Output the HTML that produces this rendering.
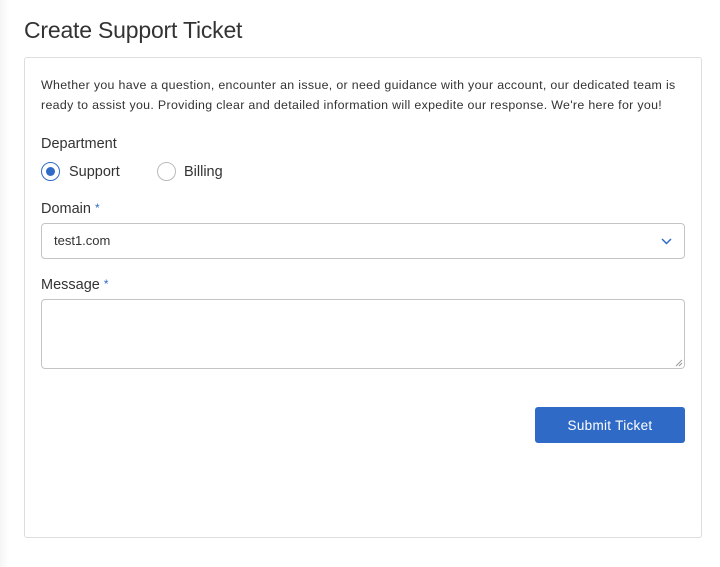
<!DOCTYPE html>
<html><head><style>
body{margin:0;width:720px;height:567px;background:#fff;font-family:"Liberation Sans",sans-serif;color:#333;position:relative;overflow:hidden}
.edge{position:absolute;left:0;top:0;width:9px;height:567px;background:linear-gradient(90deg,#f5f5f5,#fff)}
h1{position:absolute;left:24px;top:17px;margin:0;font-weight:400;font-size:23px;color:#333;letter-spacing:-0.2px}
.card{position:absolute;left:24px;top:57px;width:678px;height:481px;border:1px solid #ddd;border-radius:3px;box-sizing:border-box}
.p{position:absolute;left:41px;top:76px;width:645px;font-size:12.4px;line-height:19.5px;color:#333;letter-spacing:0.32px}
.lbl{position:absolute;left:41px;font-size:14.5px;color:#333}
.lbl b{color:#2f6bc6;font-weight:400;font-size:12px;vertical-align:top}
.radio{position:absolute;top:162px;width:19px;height:19px;border-radius:50%;box-sizing:border-box}
.in{position:absolute;left:41px;width:644px;border:1px solid #c4c4c4;border-radius:4px;box-sizing:border-box}
.btn{position:absolute;left:535px;top:407px;width:150px;height:36px;background:#2f6bc6;border-radius:3px;color:#fff;font-size:13.5px;text-align:center;line-height:37px;letter-spacing:0.3px}
</style></head><body>
<div class="edge"></div>
<h1>Create Support Ticket</h1>
<div class="card"></div>
<div class="p">Whether you have a question, encounter an issue, or need guidance with your account, our dedicated team is<br>ready to assist you. Providing clear and detailed information will expedite our response. We're here for you!</div>
<div class="lbl" style="top:136px">Department</div>
<div class="radio" style="left:41px;border:1.5px solid #2f6bc6"><div style="position:absolute;left:3.5px;top:3.5px;width:9px;height:9px;border-radius:50%;background:#2f6bc6"></div></div>
<div class="lbl" style="left:69px;top:164px">Support</div>
<div class="radio" style="left:157px;border:1px solid #bbb"></div>
<div class="lbl" style="left:184px;top:164px">Billing</div>
<div class="lbl" style="top:201px">Domain <b>*</b></div>
<div class="in" style="top:223px;height:36px"><span style="position:absolute;left:12px;top:9px;font-size:13px">test1.com</span>
<svg style="position:absolute;right:12px;top:14px" width="11" height="7" viewBox="0 0 11 7"><path d="M1 1l4.5 4.5L10 1" fill="none" stroke="#2f6bc6" stroke-width="1.5"/></svg></div>
<div class="lbl" style="top:277px">Message <b>*</b></div>
<div class="in" style="top:299px;height:70px"><svg style="position:absolute;right:1px;bottom:1px" width="8" height="8"><path d="M1 7L7 1M4 7L7 4" stroke="#999" stroke-width="1"/></svg></div>
<div class="btn">Submit Ticket</div>
</body></html>
